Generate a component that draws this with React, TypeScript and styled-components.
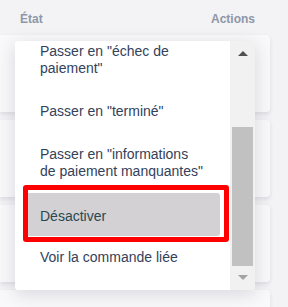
import styled, { createGlobalStyle } from 'styled-components';

const GlobalStyle = createGlobalStyle`
    html, body {
        margin: 0;
        padding: 0;
        background: #f3f2f5;
        font-family: "Liberation Sans", Arial, sans-serif;
    }
`;

const Page = styled.div`
    position: relative;
    width: 288px;
    height: 307px;
    overflow: hidden;
`;

const HeaderRow = styled.div`
    display: flex;
    justify-content: space-between;
    align-items: flex-end;
    height: 26px;
    padding: 0 33px 0 20px;
    font-size: 12px;
    font-weight: bold;
    color: #8d97a7;
    line-height: 14px;
    box-sizing: border-box;
`;

const Rows = styled.div`
    display: flex;
    flex-direction: column;
    gap: 8px;
    padding-top: 9px;
    width: 270px;
`;

const Card = styled.div`
    height: 77px;
    background: #f9f9fb;
    border-radius: 0 4px 4px 0;
    box-shadow: 0 2px 4px rgba(40, 40, 70, 0.1);
`;

const Menu = styled.div`
    position: absolute;
    left: 15px;
    top: 41px;
    width: 240px;
    height: 249px;
    display: flex;
    background: #fff;
    border-radius: 3px;
    box-shadow: 0 4px 18px rgba(40, 40, 70, 0.16);
    overflow: hidden;
`;

const List = styled.div`
    flex: 1;
    overflow: hidden;
`;

const ListInner = styled.ul`
    list-style: none;
    margin: -11px 0 0;
    padding: 0;
`;

const Item = styled.li<{ $active?: boolean }>`
    position: relative;
    margin: 0 10px;
    padding: ${(p) => (p.$active ? '15px 15px 11px' : '13px 15px')};
    font-size: 14px;
    line-height: 17px;
    border-radius: 3px;
    color: ${(p) => (p.$active ? '#2a4850' : '#33425a')};
    background: ${(p) => (p.$active ? '#d3d1d4' : 'transparent')};
`;

const Highlight = styled.span`
    position: absolute;
    left: -2px;
    top: -8px;
    right: -9px;
    bottom: -6px;
    border: 5px solid #ff0000;
    border-radius: 3px;
    pointer-events: none;
`;

const Scrollbar = styled.div`
    width: 25px;
    display: flex;
    flex-direction: column;
    align-items: center;
    background: #f1f1f1;
`;

const ArrowButton = styled.div`
    height: 25px;
    width: 100%;
    display: flex;
    align-items: center;
    justify-content: center;
`;

const ArrowUp = styled.span`
    width: 0;
    height: 0;
    border-left: 5px solid transparent;
    border-right: 5px solid transparent;
    border-bottom: 5px solid #505050;
`;

const ArrowDown = styled.span`
    width: 0;
    height: 0;
    border-left: 5px solid transparent;
    border-right: 5px solid transparent;
    border-top: 5px solid #a3a3a3;
`;

const Track = styled.div`
    flex: 1;
    width: 21px;
    padding-top: 61px;
`;

const Thumb = styled.div`
    height: 139px;
    background: #c1c1c1;
`;

const items = [
    { label: 'Passer en "échec de paiement"' },
    { label: 'Passer en "terminé"' },
    { label: 'Passer en "informations de paiement manquantes"' },
    { label: 'Désactiver', active: true },
    { label: 'Voir la commande liée' },
];

function App() {
    return (
        <Page>
            <GlobalStyle />
            <HeaderRow>
                <span>État</span>
                <span>Actions</span>
            </HeaderRow>
            <Rows>
                <Card />
                <Card />
                <Card />
                <Card />
            </Rows>
            <Menu>
                <List>
                    <ListInner>
                        {items.map((item, index) => (
                            <Item key={index} $active={item.active}>
                                {item.label}
                                {item.active && <Highlight />}
                            </Item>
                        ))}
                    </ListInner>
                </List>
                <Scrollbar>
                    <ArrowButton>
                        <ArrowUp />
                    </ArrowButton>
                    <Track>
                        <Thumb />
                    </Track>
                    <ArrowButton>
                        <ArrowDown />
                    </ArrowButton>
                </Scrollbar>
            </Menu>
        </Page>
    );
}

export default App;
